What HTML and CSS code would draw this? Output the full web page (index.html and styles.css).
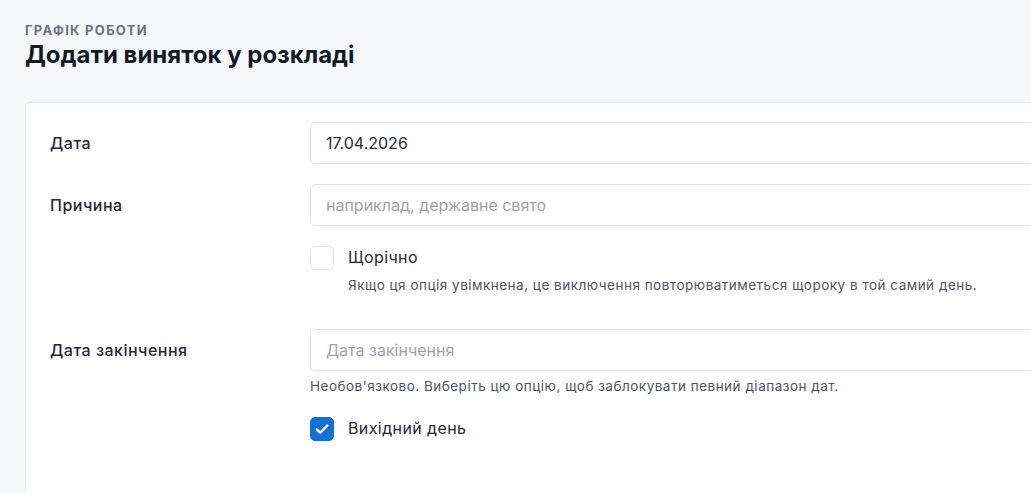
FILE: index.html
```html
<!DOCTYPE html>
<html lang="uk">
<head>
    <meta charset="UTF-8">
    <meta name="viewport" content="width=device-width, initial-scale=1.0">
    <title>Додати виняток у розкладі</title>
    <link rel="stylesheet" href="styles.css">
</head>
<body>
    <div class="page">
        <div class="page-header">
            <div class="eyebrow">Графік роботи</div>
            <h1>Додати виняток у розкладі</h1>
        </div>

        <form class="card">
            <div class="form-row">
                <label class="form-label" for="date">Дата</label>
                <div class="form-field">
                    <input class="text-input" id="date" type="text" value="17.04.2026">
                </div>
            </div>

            <div class="form-row form-row-spaced">
                <label class="form-label" for="reason">Причина</label>
                <div class="form-field">
                    <input class="text-input" id="reason" type="text" placeholder="наприклад, державне свято">
                    <div class="check-row">
                        <span class="checkbox"></span>
                        <div class="check-text">
                            <div class="check-label">Щорічно</div>
                            <div class="help">Якщо ця опція увімкнена, це виключення повторюватиметься щороку в той самий день.</div>
                        </div>
                    </div>
                </div>
            </div>

            <div class="form-row">
                <label class="form-label" for="end-date">Дата закінчення</label>
                <div class="form-field">
                    <input class="text-input" id="end-date" type="text" placeholder="Дата закінчення">
                    <div class="help help-under">Необов'язково. Виберіть цю опцію, щоб заблокувати певний діапазон дат.</div>
                    <div class="check-row">
                        <span class="checkbox checked">
                            <svg viewBox="0 0 24 24" width="18" height="18"><path d="M5 12.5l4.5 4.5L19 7.5" fill="none" stroke="#fff" stroke-width="3.2" stroke-linecap="round" stroke-linejoin="round"/></svg>
                        </span>
                        <div class="check-text">
                            <div class="check-label">Вихідний день</div>
                        </div>
                    </div>
                </div>
            </div>
        </form>
    </div>
</body>
</html>
```

FILE: styles.css
```css
body {
    margin: 0;
    font-family: Inter, "Noto Sans", sans-serif;
    background-color: #f6f7f9;
    color: #1f2937;
    overflow: hidden;
}
.page {
    padding: 22px 0 0 25px;
    width: 1200px;
}
.eyebrow {
    font-size: 13px;
    font-weight: 700;
    letter-spacing: 0.1em;
    text-transform: uppercase;
    color: #6b7280;
    line-height: 16px;
}
h1 {
    margin: 1px 0 0;
    font-size: 24px;
    font-weight: 700;
    color: #111827;
    line-height: 32px;
}
.card {
    margin-top: 31px;
    padding: 19px 0 40px 24px;
    background-color: #fff;
    border: 1px solid #e8eaee;
    border-radius: 6px;
    box-shadow: 0 1px 2px rgba(0, 0, 0, 0.03);
    min-height: 400px;
}
.form-row {
    display: grid;
    grid-template-columns: 260px 1fr;
    margin-bottom: 20px;
}
.form-row-spaced {
    margin-bottom: 35px;
}
.form-label {
    font-size: 16px;
    font-weight: 500;
    letter-spacing: 0.5px;
    color: #1f2937;
    line-height: 42px;
}
.text-input {
    box-sizing: border-box;
    display: block;
    width: 100%;
    height: 42px;
    padding: 0 15px;
    border: 1px solid #e3e5e9;
    border-radius: 5px;
    background: #fff;
    font-family: Inter, sans-serif;
    font-size: 16px;
    color: #1f2937;
}
.text-input::placeholder {
    color: #9ca3af;
}
.check-row {
    display: flex;
    align-items: flex-start;
    gap: 14px;
    margin-top: 20px;
}
.checkbox {
    box-sizing: border-box;
    flex: none;
    width: 24px;
    height: 24px;
    border: 1px solid #e3e5e9;
    border-radius: 5px;
    background: #fff;
    display: flex;
    align-items: center;
    justify-content: center;
}
.checkbox.checked {
    background: #1570d6;
    border-color: #1570d6;
}
.check-label {
    font-size: 16px;
    letter-spacing: 0.4px;
    color: #1f2937;
    line-height: 22px;
}
.help {
    font-size: 13.5px;
    letter-spacing: 0.5px;
    color: #4b5563;
    line-height: 18px;
    margin-top: 8px;
}
.help-under {
    margin-top: 6px;
}
.help-under + .check-row {
    margin-top: 22px;
}
```
